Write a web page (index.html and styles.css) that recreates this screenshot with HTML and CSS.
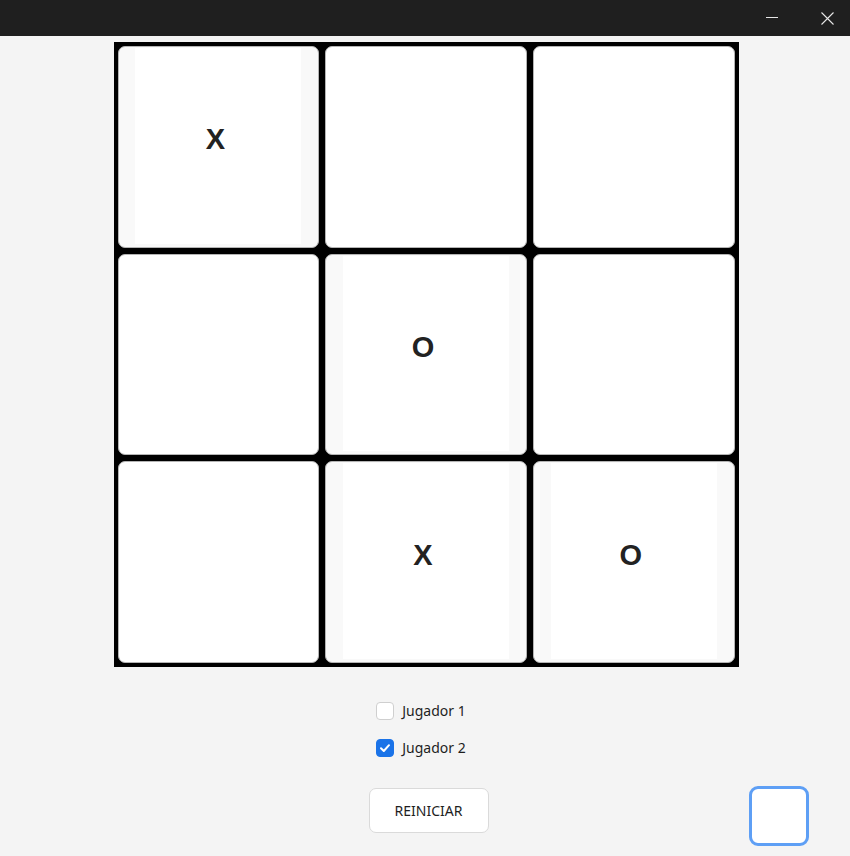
FILE: index.html
```html
<!DOCTYPE html>
<html lang="es">
<head>
<meta charset="utf-8">
<title>Tres en raya</title>
<link rel="stylesheet" href="styles.css">
</head>
<body>
<header class="titlebar">
  <button class="win-btn" aria-label="Minimizar">
    <svg width="12" height="12" viewBox="0 0 12 12"><path d="M0 6.5H12" stroke="#e6e6e6" stroke-width="1"/></svg>
  </button>
  <button class="win-btn" aria-label="Cerrar">
    <svg width="13" height="13" viewBox="0 0 13 13"><path d="M0.5 0.5L12.5 12.5M12.5 0.5L0.5 12.5" stroke="#e6e6e6" stroke-width="1.1"/></svg>
  </button>
</header>
<main class="app">
  <div class="board">
    <div class="cell filled"><span class="mark">X</span></div>
    <div class="cell"></div>
    <div class="cell"></div>
    <div class="cell"></div>
    <div class="cell filled"><span class="mark">O</span></div>
    <div class="cell"></div>
    <div class="cell"></div>
    <div class="cell filled"><span class="mark">X</span></div>
    <div class="cell filled"><span class="mark">O</span></div>
  </div>
  <div class="players">
    <label class="player"><span class="check"></span>Jugador 1</label>
    <label class="player"><span class="check checked"><svg width="12" height="12" viewBox="0 0 12 12"><path d="M2 6.3L4.8 9L10 3.2" fill="none" stroke="#fff" stroke-width="2" stroke-linecap="round" stroke-linejoin="round"/></svg></span>Jugador 2</label>
  </div>
  <div class="actions">
    <span></span>
    <button class="reset">REINICIAR</button>
    <span class="square"></span>
  </div>
</main>
</body>
</html>
```
FILE: styles.css
```css
* { box-sizing: border-box; }
html, body { margin: 0; padding: 0; }
body {
  width: 850px;
  height: 856px;
  overflow: hidden;
  background: #f4f4f4;
  font-family: "Segoe UI", "Noto Sans", "Open Sans", sans-serif;
  color: #1c1c1c;
}
.titlebar {
  height: 36px;
  background: #1f1f1f;
  display: flex;
  justify-content: flex-end;
  align-items: center;
  gap: 9px;
  padding-right: 0;
}
.win-btn {
  width: 46px;
  height: 36px;
  border: 0;
  background: transparent;
  display: flex;
  align-items: center;
  justify-content: center;
  padding: 0;
}
.win-btn:first-child { margin-top: -3px; }
.win-btn svg { display: block; }
.app {
  display: flex;
  flex-direction: column;
  align-items: center;
  padding-top: 6px;
}
.board {
  width: 625px;
  height: 625px;
  margin-left: 2px;
  background: #000;
  padding: 4px;
  display: grid;
  grid-template-columns: repeat(3, 1fr);
  grid-template-rows: repeat(3, 1fr);
  gap: 6px;
}
.cell {
  background: #fff;
  border: 1px solid #b4b4b4;
  border-radius: 7px;
  display: flex;
  justify-content: center;
  padding: 1px 0 3px;
}
.cell.filled { background: #f9f9f9; }
.mark {
  width: 166px;
  background: #fff;
  display: flex;
  align-items: center;
  justify-content: center;
  padding-bottom: 12px;
  padding-right: 6px;
  font-family: "Liberation Sans", Arial, sans-serif;
  font-weight: bold;
  font-size: 29px;
  color: #222;
}
.players {
  margin-top: 35px;
  display: flex;
  flex-direction: column;
  gap: 19px;
  margin-left: -8px;
}
.player {
  display: flex;
  align-items: center;
  font-size: 14px;
  line-height: 18px;
  color: #1e1e1e;
}
.check {
  width: 18px;
  height: 18px;
  border: 1px solid #cfcfcf;
  border-radius: 4px;
  background: #fff;
  margin-right: 8px;
  display: flex;
  align-items: center;
  justify-content: center;
}
.check.checked {
  background: #1a73e8;
  border-color: #1a73e8;
}
.check svg { display: block; }
.actions {
  width: 100%;
  display: grid;
  grid-template-columns: 1fr auto 1fr;
  align-items: start;
  margin-top: 29px;
}
.reset {
  grid-column: 2;
  width: 120px;
  height: 45px;
  margin-left: 7px;
  margin-top: 2px;
  background: #fff;
  border: 1px solid #dadada;
  border-radius: 7px;
  font-family: "Segoe UI", "Noto Sans", "Open Sans", sans-serif;
  font-size: 14px;
  color: #1e1e1e;
  padding: 0;
}
.square {
  justify-self: end;
  margin-right: 41px;
  width: 60px;
  height: 60px;
  background: #fff;
  border: 3px solid #5e9ff5;
  border-radius: 9px;
}
```
